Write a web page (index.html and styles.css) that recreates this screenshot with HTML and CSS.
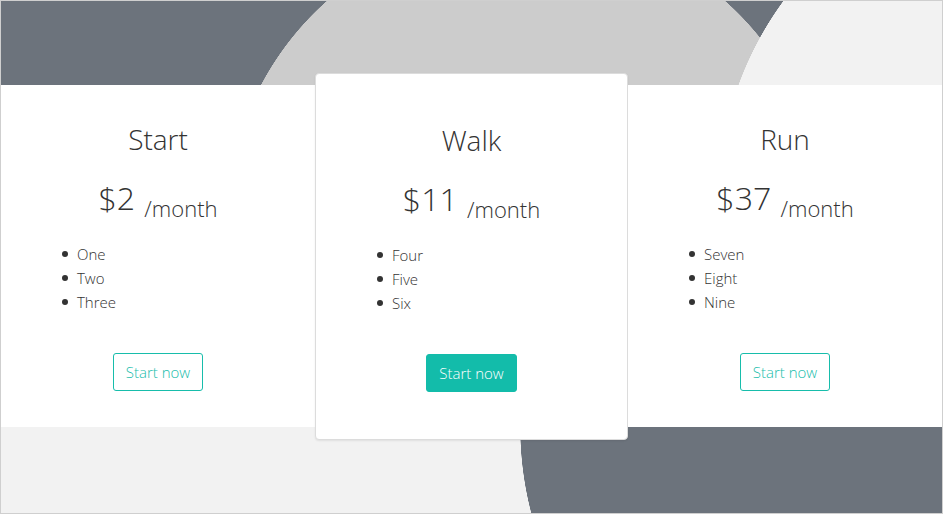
FILE: index.html
```html
<!DOCTYPE html>
<html lang="en">
<head>
<meta charset="utf-8">
<title>Pricing</title>
<link rel="stylesheet" href="styles.css">
</head>
<body>
<div class="page">
  <div class="band-top"></div>
  <section class="plans">
    <div class="plan">
      <h2 class="plan-title">Start</h2>
      <p class="plan-price">$2 <small>/month</small></p>
      <ul class="plan-features">
        <li>One</li>
        <li>Two</li>
        <li>Three</li>
      </ul>
      <div class="plan-action"><a class="btn btn-outline" href="#">Start now</a></div>
    </div>
    <div class="plan plan-featured">
      <h2 class="plan-title">Walk</h2>
      <p class="plan-price">$11 <small>/month</small></p>
      <ul class="plan-features">
        <li>Four</li>
        <li>Five</li>
        <li>Six</li>
      </ul>
      <div class="plan-action"><a class="btn btn-solid" href="#">Start now</a></div>
    </div>
    <div class="plan">
      <h2 class="plan-title">Run</h2>
      <p class="plan-price">$37 <small>/month</small></p>
      <ul class="plan-features">
        <li>Seven</li>
        <li>Eight</li>
        <li>Nine</li>
      </ul>
      <div class="plan-action"><a class="btn btn-outline" href="#">Start now</a></div>
    </div>
  </section>
  <div class="band-bottom"></div>
</div>
</body>
</html>
```

FILE: styles.css
```css
* { box-sizing: border-box; }

html, body {
  margin: 0;
  padding: 0;
}

body {
  font-family: "Open Sans", "Noto Sans", "Liberation Sans", sans-serif;
  font-weight: 300;
  color: #333;
  background: #fff;
}

.page {
  width: 943px;
  height: 514px;
  border: 1px solid #cfcfcf;
  display: grid;
  grid-template-rows: 84px 342px 86px;
  background: #fff;
  overflow: hidden;
}

.band-top {
  background:
    radial-gradient(circle 337px at 1054px 199px, #f2f2f2 336.5px, rgba(242,242,242,0) 337px),
    radial-gradient(circle 300px at 525px 224px, #cccccc 299.5px, rgba(204,204,204,0) 300px),
    #6c737c;
}

.band-bottom {
  background:
    radial-gradient(circle 342px at 861px 0px, #6c737c 341.5px, rgba(108,115,124,0) 342px),
    #f2f2f2;
}

.plans {
  display: grid;
  grid-template-columns: 314px 313px 314px;
  grid-template-rows: 342px;
  height: 342px;
  position: relative;
  z-index: 1;
}

.plan {
  background: #fff;
  padding: 38px 0 36px;
  text-align: center;
}

.plan-featured {
  margin: -12px 0 -13px;
  padding-top: 50px;
  border: 1px solid #dcdcdc;
  border-radius: 4px;
  box-shadow: 0 1px 2px rgba(0,0,0,0.08);
}

.plan-title {
  margin: 0;
  font-size: 28px;
  line-height: 32px;
  font-weight: 300;
}

.plan-price {
  margin: 23px 0 0;
  font-size: 32px;
  line-height: 40px;
  font-weight: 300;
}

.plan-price small {
  font-size: 22px;
  line-height: 1;
  vertical-align: -7px;
  margin-left: 1px;
}

.plan-features {
  margin: 23px 0 0;
  padding: 0 0 0 76px;
  list-style: none;
  text-align: left;
  font-size: 15px;
  line-height: 24px;
}

.plan-features li::before {
  content: "";
  display: inline-block;
  width: 6px;
  height: 6px;
  border-radius: 50%;
  background: #333;
  margin: 0 9px 0 -15px;
  vertical-align: 3px;
}

.plan-action {
  margin-top: 39px;
}

.btn {
  display: inline-block;
  height: 38px;
  line-height: 36px;
  padding: 0 12px;
  border: 1px solid #17bdab;
  border-radius: 3px;
  font-size: 15px;
  text-decoration: none;
}

.btn-outline {
  color: #17bdab;
  background: #fff;
}

.btn-solid {
  color: #fff;
  background: #13bcaa;
  border-color: #13bcaa;
}
```
